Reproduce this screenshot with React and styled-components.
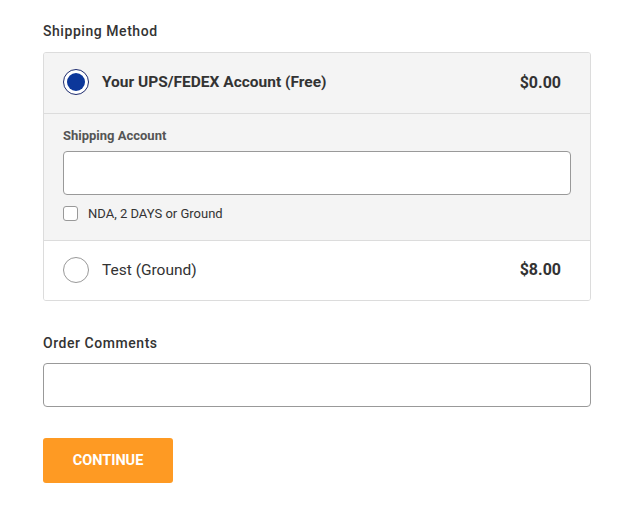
import React from 'react';
import styled, { createGlobalStyle } from 'styled-components';

const GlobalStyle = createGlobalStyle`
  body {
    margin: 0;
    padding: 0;
    background: #fff;
    font-family: Roboto, 'Liberation Sans', sans-serif;
    color: #333;
  }
`;

const Page = styled.div`
  width: 548px;
  padding: 21px 0 0 43px;
`;

const Legend = styled.div`
  font-size: 14px;
  font-weight: 500;
  line-height: 20px;
  color: #333;
  letter-spacing: 0.55px;
  margin-bottom: ${(p) => p.$gap}px;
`;

const Panel = styled.div`
  border: 1px solid #dcdcdc;
  border-radius: 3px;
  overflow: hidden;
`;

const OptionRow = styled.div`
  box-sizing: border-box;
  display: flex;
  align-items: center;
  height: 60px;
  padding: 0 29px 2px 19px;
  background: ${(p) => (p.$active ? '#f4f4f4' : '#fff')};
  border-top: ${(p) => (p.$divider ? '1px solid #dcdcdc' : 'none')};
`;

const Radio = styled.span`
  box-sizing: border-box;
  width: 26px;
  height: 26px;
  border-radius: 50%;
  border: ${(p) => (p.$checked ? '1.5px solid #1d2b6e' : '1px solid #999')};
  background: #fff;
  display: flex;
  align-items: center;
  justify-content: center;
  flex-shrink: 0;

  &::after {
    content: '';
    display: ${(p) => (p.$checked ? 'block' : 'none')};
    width: 18px;
    height: 18px;
    border-radius: 50%;
    background: #0c379a;
  }
`;

const OptionLabel = styled.span`
  flex: 1;
  margin-left: 13px;
  font-size: 15.5px;
  font-weight: ${(p) => (p.$bold ? 700 : 400)};
  color: #333;
`;

const Price = styled.span`
  font-size: 16px;
  font-weight: 700;
  color: #333;
`;

const SubPanel = styled.div`
  background: #f4f4f4;
  border-top: 1px solid #dcdcdc;
  padding: 14px 19px 19px;
`;

const FieldLabel = styled.div`
  font-size: 13px;
  font-weight: 700;
  color: #555;
  line-height: 16px;
  margin-bottom: 7px;
`;

const TextInput = styled.input`
  box-sizing: border-box;
  display: block;
  width: 100%;
  height: 44px;
  border: 1px solid #999;
  border-radius: 4px;
  background: #fff;
  font-family: inherit;
  font-size: 14px;
  padding: 0 12px;
  outline: none;
`;

const CheckRow = styled.label`
  display: flex;
  align-items: center;
  margin-top: 11px;
  font-size: 13px;
  line-height: 15px;
  color: #333;
`;

const CheckBox = styled.span`
  box-sizing: border-box;
  width: 15px;
  height: 15px;
  border: 1px solid #999;
  border-radius: 3px;
  background: #fff;
  margin-right: 10px;
`;

const Button = styled.button`
  margin-top: 31px;
  width: 130px;
  height: 45px;
  border: none;
  border-radius: 3px;
  background: #fe9a23;
  color: #fff;
  font-family: inherit;
  font-size: 14.5px;
  font-weight: 700;
  text-transform: uppercase;
  cursor: pointer;
`;

const Spacer = styled.div`
  height: 32px;
`;

export default function App() {
  return (
    <Page>
      <GlobalStyle />
      <Legend $gap={11}>Shipping Method</Legend>
      <Panel>
        <OptionRow $active>
          <Radio $checked />
          <OptionLabel $bold>Your UPS/FEDEX Account (Free)</OptionLabel>
          <Price>$0.00</Price>
        </OptionRow>
        <SubPanel>
          <FieldLabel>Shipping Account</FieldLabel>
          <TextInput type="text" />
          <CheckRow>
            <CheckBox />
            NDA, 2 DAYS or Ground
          </CheckRow>
        </SubPanel>
        <OptionRow $divider>
          <Radio />
          <OptionLabel>Test (Ground)</OptionLabel>
          <Price>$8.00</Price>
        </OptionRow>
      </Panel>
      <Spacer />
      <Legend $gap={10}>Order Comments</Legend>
      <TextInput type="text" />
      <Button>Continue</Button>
    </Page>
  );
}
